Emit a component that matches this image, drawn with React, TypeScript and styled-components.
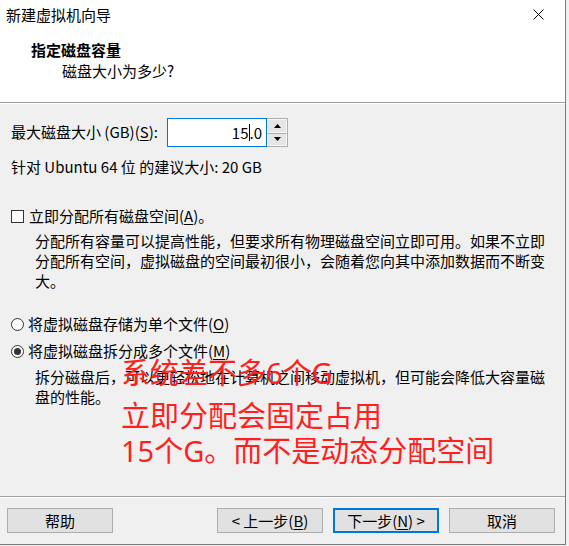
import React from 'react';
import styled, { createGlobalStyle } from 'styled-components';

const GlobalStyle = createGlobalStyle`
  html, body {
    margin: 0;
    padding: 0;
    background: #f0f0f0;
  }
  body {
    font-family: "Noto Sans CJK SC", "Noto Sans", sans-serif;
    font-size: 15px;
    color: #000;
  }
`;

const Window = styled.div`
  position: relative;
  width: 565px;
  height: 544px;
  display: flex;
  flex-direction: column;
  background: #f0f0f0;
  border-right: 1px solid #7a7a7a;
  border-bottom: 1px solid #7a7a7a;
  overflow: hidden;
`;

const Header = styled.div`
  height: 103px;
  background: #fff;
  border-bottom: 1px solid #a0a0a0;
  box-shadow: 0 1px 0 #fff;
  box-sizing: border-box;
  flex-shrink: 0;
`;

const TitleBar = styled.div`
  height: 29px;
  display: flex;
  align-items: center;
  justify-content: space-between;
  padding-left: 6px;
  line-height: 29px;
`;

const CloseButton = styled.div`
  width: 46px;
  height: 29px;
  display: flex;
  align-items: center;
  justify-content: center;
  margin-right: 4px;
`;

const HeaderTitle = styled.div`
  margin: 11px 0 0 31px;
  font-weight: bold;
  line-height: 20px;
`;

const HeaderSub = styled.div`
  margin: 1px 0 0 62px;
  line-height: 20px;
`;

const Body = styled.div`
  padding: 14px 11px 0 11px;
  flex: 1;
`;

const FieldRow = styled.div`
  display: flex;
  align-items: center;
  height: 30px;
`;

const FieldLabel = styled.span`
  width: 156px;
  line-height: 20px;
  white-space: nowrap;
`;

const SpinBox = styled.div`
  display: flex;
  height: 29px;
  margin-top: 1px;
`;

const SpinInput = styled.div`
  width: 100px;
  box-sizing: border-box;
  border: 1px solid #0078d7;
  background: #fff;
  display: flex;
  align-items: center;
  justify-content: flex-end;
  padding-right: 4px;
  line-height: 20px;
`;

const Caret = styled.span`
  display: inline-block;
  width: 1px;
  height: 17px;
  background: #000;
  vertical-align: middle;
`;

const SpinButtons = styled.div`
  width: 21px;
  box-sizing: border-box;
  border: 1px solid #adadad;
  border-left: none;
  display: flex;
  flex-direction: column;
  background: #f0f0f0;
`;

const SpinArrow = styled.div<{ $down?: boolean }>`
  flex: 1;
  display: flex;
  align-items: center;
  justify-content: center;
  background: #e5e5e5;
  border: 1px solid #f7f7f7;
  border-top: ${p => (p.$down ? '1px solid #adadad' : '1px solid #f7f7f7')};
`;

const TextLine = styled.div<{ $top: number }>`
  margin-top: ${p => p.$top}px;
  line-height: 20px;
`;

const OptionRow = styled.div<{ $top: number }>`
  display: flex;
  align-items: center;
  margin-top: ${p => p.$top}px;
  line-height: 20px;
  height: 20px;
`;

const CheckBox = styled.span`
  width: 13px;
  height: 13px;
  box-sizing: border-box;
  border: 1px solid #333;
  background: #fff;
  margin-right: 5px;
  flex-shrink: 0;
`;

const Radio = styled.span<{ $checked?: boolean }>`
  width: 13px;
  height: 13px;
  box-sizing: border-box;
  border: 1px solid #333;
  border-radius: 50%;
  background: #fff;
  margin-right: 4px;
  display: flex;
  align-items: center;
  justify-content: center;
  flex-shrink: 0;
  &::after {
    content: '';
    width: 7px;
    height: 7px;
    border-radius: 50%;
    background: ${p => (p.$checked ? '#333' : 'transparent')};
  }
`;

const Description = styled.div<{ $top: number }>`
  margin-top: ${p => p.$top}px;
  padding-left: 24px;
  line-height: 20px;
`;

const Mnemonic = styled.u`
  text-underline-offset: 2px;
`;

const Footer = styled.div`
  border-top: 1px solid #a0a0a0;
  box-shadow: inset 0 1px 0 #fff;
  padding: 11px 10px 11px 7px;
  display: flex;
  align-items: center;
  gap: 10px;
  flex-shrink: 0;
`;

const Spacer = styled.div`
  flex: 1;
`;

const Button = styled.div<{ $primary?: boolean }>`
  width: 106px;
  height: 25px;
  box-sizing: border-box;
  border: ${p => (p.$primary ? '2px solid #0078d7' : '1px solid #adadad')};
  background: #e1e1e1;
  display: flex;
  align-items: center;
  justify-content: center;
  line-height: 20px;
  white-space: nowrap;
`;

const Annotation = styled.div`
  position: absolute;
  left: 121px;
  top: 355px;
  color: #ff1f1f;
  font-family: "Noto Sans", "Noto Sans CJK SC", sans-serif;
  font-size: 29px;
  line-height: 35px;
  white-space: nowrap;
  pointer-events: none;
`;

const NoteLine = styled.div<{ $gap?: number }>`
  margin-bottom: ${p => p.$gap ?? 0}px;
`;

export default function App() {
  return (
    <>
      <GlobalStyle />
      <Window>
        <Header>
          <TitleBar>
            <span>新建虚拟机向导</span>
            <CloseButton>
              <svg width="11" height="11" viewBox="0 0 11 11">
                <path d="M0.5 0.5 L10.5 10.5 M10.5 0.5 L0.5 10.5" stroke="#000" strokeWidth="1" fill="none" />
              </svg>
            </CloseButton>
          </TitleBar>
          <HeaderTitle>指定磁盘容量</HeaderTitle>
          <HeaderSub>磁盘大小为多少?</HeaderSub>
        </Header>

        <Body>
          <FieldRow>
            <FieldLabel>
              最大磁盘大小 (GB)(<Mnemonic>S</Mnemonic>):
            </FieldLabel>
            <SpinBox>
              <SpinInput>
                15<Caret />.0
              </SpinInput>
              <SpinButtons>
                <SpinArrow>
                  <svg width="7" height="4" viewBox="0 0 7 4">
                    <path d="M3.5 0 L7 4 L0 4 Z" fill="#000" />
                  </svg>
                </SpinArrow>
                <SpinArrow $down>
                  <svg width="7" height="4" viewBox="0 0 7 4">
                    <path d="M0 0 L7 0 L3.5 4 Z" fill="#000" />
                  </svg>
                </SpinArrow>
              </SpinButtons>
            </SpinBox>
          </FieldRow>

          <TextLine $top={10}>针对 Ubuntu 64 位 的建议大小: 20 GB</TextLine>

          <OptionRow $top={29}>
            <CheckBox />
            立即分配所有磁盘空间(<Mnemonic>A</Mnemonic>)。
          </OptionRow>
          <Description $top={5}>
            分配所有容量可以提高性能，但要求所有物理磁盘空间立即可用。如果不立即分配所有空间，虚拟磁盘的空间最初很小，会随着您向其中添加数据而不断变大。
          </Description>

          <OptionRow $top={23}>
            <Radio />
            将虚拟磁盘存储为单个文件(<Mnemonic>O</Mnemonic>)
          </OptionRow>
          <OptionRow $top={7}>
            <Radio $checked />
            将虚拟磁盘拆分成多个文件(<Mnemonic>M</Mnemonic>)
          </OptionRow>
          <Description $top={6}>
            拆分磁盘后，可以更轻松地在计算机之间移动虚拟机，但可能会降低大容量磁盘的性能。
          </Description>
        </Body>

        <Footer>
          <Button>帮助</Button>
          <Spacer />
          <Button>
            &lt; 上一步(<Mnemonic>B</Mnemonic>)
          </Button>
          <Button $primary>
            下一步(<Mnemonic>N</Mnemonic>) &gt;
          </Button>
          <Button>取消</Button>
        </Footer>

        <Annotation>
          <NoteLine $gap={8}>系统差不多6个G</NoteLine>
          <NoteLine>立即分配会固定占用</NoteLine>
          <NoteLine>15个G。而不是动态分配空间</NoteLine>
        </Annotation>
      </Window>
    </>
  );
}
